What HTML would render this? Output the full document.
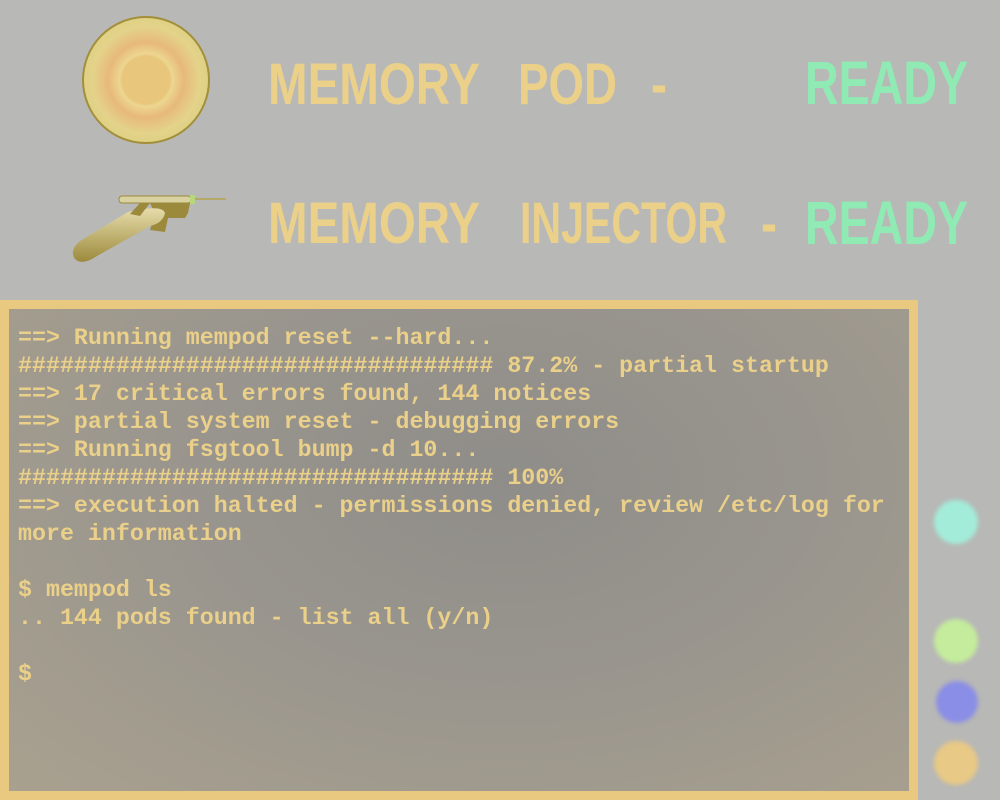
<!DOCTYPE html>
<html><head><meta charset="utf-8"><style>
html,body{margin:0;padding:0;}
body{width:1000px;height:800px;background:#b8b8b6;position:relative;overflow:hidden;font-family:"Liberation Sans",sans-serif;}
.term{position:absolute;left:0;top:300px;width:900px;height:482px;border:9px solid #e8c97f;
background:radial-gradient(ellipse at 55% 35%,#8f8d89 0%,#99958e 45%,#a9a18f 100%);}
pre{margin:0;position:absolute;left:9px;top:15px;font-family:"Liberation Mono",monospace;font-weight:bold;font-size:23.3px;line-height:28px;color:#ebd08a;}
.dot{position:absolute;width:44px;height:44px;border-radius:50%;filter:blur(2px);}
</style></head><body>
<svg style="position:absolute;left:0;top:0" width="1000" height="290">
<defs><radialGradient id="pg" cx="50%" cy="50%" r="50%">
<stop offset="0" stop-color="#e7c77d"/><stop offset="0.38" stop-color="#e8c77c"/><stop offset="0.42" stop-color="#ecd690"/><stop offset="0.6" stop-color="#e7b97a"/><stop offset="0.85" stop-color="#e4d38a"/><stop offset="1" stop-color="#ddd084"/></radialGradient>
<linearGradient id="hg" x1="0" y1="0" x2="0" y2="1"><stop offset="0" stop-color="#e6dcaa"/><stop offset="1" stop-color="#9c8a3c"/></linearGradient></defs>
<circle cx="146" cy="80" r="63" fill="url(#pg)" stroke="#a38f3a" stroke-width="2"/>
<path d="M150 203 L190 203 L188 213 L185 218 L168 218 L165 232 L150 230 L155 214 Z" fill="#9c8a3c"/>
<path d="M128 212 Q162 204 165 213 Q163 223 150 226 L97 256 Q82 266 75 259 Q69 250 80 241 Z" fill="url(#hg)"/>
<path d="M140 203 L150 203 L140 216 L130 214 Z" fill="#9c8a3c"/>
<rect x="119" y="196" width="72" height="7" rx="3" fill="#d9d2a0" stroke="#9c8a3c"/>
<rect x="190" y="195" width="5" height="9" fill="#b6d77a"/>
<line x1="195" y1="199" x2="226" y2="199" stroke="#b4a24e" stroke-width="1.5"/>
<g font-family="Liberation Sans, sans-serif" font-size="58" font-weight="bold" fill="#ebd08a">
<text x="268" y="104" textLength="212" lengthAdjust="spacingAndGlyphs">MEMORY</text>
<text x="518" y="104" textLength="99" lengthAdjust="spacingAndGlyphs">POD</text>
<text x="651" y="104" textLength="16" lengthAdjust="spacingAndGlyphs">-</text>
<text x="268" y="243" textLength="212" lengthAdjust="spacingAndGlyphs">MEMORY</text>
<text x="520" y="243" textLength="207" lengthAdjust="spacingAndGlyphs">INJECTOR</text>
<text x="761" y="243" textLength="16" lengthAdjust="spacingAndGlyphs">-</text>
</g>
<g font-family="Liberation Sans, sans-serif" font-size="61" font-weight="bold" fill="#90eab4">
<text x="805" y="104" textLength="163" lengthAdjust="spacingAndGlyphs">READY</text>
<text x="805" y="244" textLength="163" lengthAdjust="spacingAndGlyphs">READY</text>
</g>
</svg>
<div class="term"><pre>==&gt; Running mempod reset --hard...
################################## 87.2% - partial startup
==&gt; 17 critical errors found, 144 notices
==&gt; partial system reset - debugging errors
==&gt; Running fsgtool bump -d 10...
################################## 100%
==&gt; execution halted - permissions denied, review /etc/log for
more information

$ mempod ls
.. 144 pods found - list all (y/n)

$</pre></div>
<div class="dot" style="left:934px;top:500px;background:#a3ecd9"></div>
<div class="dot" style="left:934px;top:619px;background:#c4ec9c"></div>
<div class="dot" style="left:936px;top:681px;width:42px;height:42px;background:#8a8ee6"></div>
<div class="dot" style="left:934px;top:741px;background:#e8c985"></div>
</body></html>
